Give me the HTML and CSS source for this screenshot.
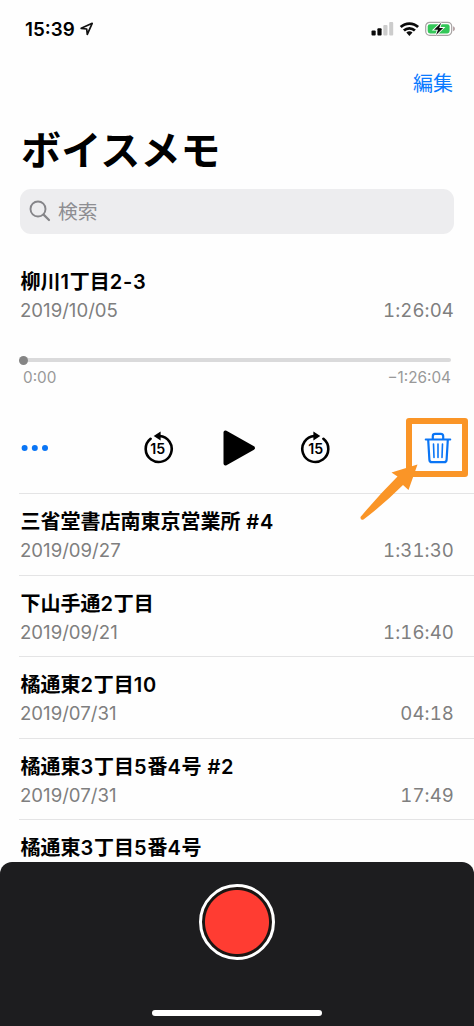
FILE: index.html
```html
<!DOCTYPE html>
<html lang="ja">
<head>
<meta charset="utf-8">
<title>ボイスメモ</title>
<link rel="stylesheet" href="styles.css">
</head>
<body>
<div class="screen">
  <header class="status">
    <div class="clock">15:39
      <svg class="location" width="14" height="14" viewBox="0 0 14 14"><path d="M1.2 6.3 12.2 1.3 7.3 12.3 6.7 7Z" fill="none" stroke="#111" stroke-width="1.7" stroke-linejoin="round"/></svg>
    </div>
    <svg class="indicators" width="86" height="16" viewBox="0 0 86 16">
      <g fill="#0a0a0a"><rect x="0.5" y="9.6" width="4.2" height="5" rx="1"/><rect x="6.4" y="7.2" width="4.2" height="7.4" rx="1"/></g>
      <g fill="#ccc"><rect x="12.3" y="4" width="4.2" height="10.6" rx="1"/><rect x="18.2" y="1" width="4" height="13.6" rx="1"/></g>
      <g fill="none" stroke="#0a0a0a" stroke-width="2.7"><path d="M29.7 6.1A12.6 12.6 0 0 1 47.1 6.1"/><path d="M32.9 9.5A8 8 0 0 1 43.9 9.5"/></g>
      <path d="M35.3 11.6A4.6 4.6 0 0 1 41.5 11.6L38.4 14.9Z" fill="#0a0a0a"/>
      <rect x="54.7" y="1.3" width="26" height="13" rx="4" fill="#fff" stroke="#a7a3a3" stroke-width="1.2"/>
      <rect x="56.7" y="3.2" width="21.9" height="9.2" rx="2.3" fill="#34c759"/>
      <path d="M82.2 5.3C84.3 6 84.3 9.6 82.2 10.3Z" fill="#a78f92"/>
      <path d="M70.2 1.8 63 8.7H67L65 13.9 72.2 7H68.2Z" fill="#0a0a0a" stroke="#fff" stroke-width="1.8" paint-order="stroke"/>
    </svg>
  </header>
  <nav class="nav">編集</nav>
  <h1 class="heading">ボイスメモ</h1>
  <div class="search">
    <svg width="22" height="22" viewBox="0 0 22 22" fill="none" stroke="#858589" stroke-width="1.9" stroke-linecap="round"><circle cx="9" cy="9" r="7.5"/><path d="M14.6 14.6 20 20" stroke-width="2.2"/></svg>
    <span>検索</span>
  </div>

  <section class="player">
    <h2 class="name">柳川<span class="n">1</span>丁目<span class="n">2-3</span></h2>
    <div class="meta"><span class="date">2019/10/05</span><span class="length">1:26:04</span></div>
    <div class="track"><i class="knob"></i></div>
    <div class="times"><span>0:00</span><span>−1:26:04</span></div>
    <div class="controls">
      <svg class="more" width="28" height="8" viewBox="0 0 28 8" fill="#0a75f5"><circle cx="3.6" cy="4" r="3"/><circle cx="13.8" cy="4" r="3"/><circle cx="24" cy="4" r="3"/></svg>
      <svg class="skip" width="32" height="34" viewBox="0 0 32 34"><path d="M8.6 7.8A13 13 0 1 0 17.5 5" fill="none" stroke="#000" stroke-width="2.6" stroke-linecap="round"/><path d="M11.7 5.1 18.6.6V9.6Z"/><text x="15.8" y="23.3" text-anchor="middle">15</text></svg>
      <svg class="play" width="34" height="38" viewBox="0 0 34 38"><path d="M3.5 3.5V34.5L31 19Z" stroke="#000" stroke-width="4" stroke-linejoin="round"/></svg>
      <svg class="skip forward" width="32" height="34" viewBox="0 0 32 34"><path d="M23.4 7.8A13 13 0 1 1 14.5 5" fill="none" stroke="#000" stroke-width="2.6" stroke-linecap="round"/><path d="M20.3 5.1 13.4.6V9.6Z"/><text x="15.8" y="23.3" text-anchor="middle">15</text></svg>
      <div class="delete">
        <svg width="28" height="32" viewBox="0 0 28 32" fill="none" stroke="#0a75f5" stroke-width="2.2" stroke-linecap="round" stroke-linejoin="round"><path d="M1.8 7.5H26.2M8.8 7V4.2Q8.8 1.8 11.2 1.8H16.8Q19.2 1.8 19.2 4.2V7M4.2 8 5.4 27.8Q5.6 30.2 8 30.2H20Q22.4 30.2 22.6 27.8L23.8 8"/><path d="M9.5 12 10 25.5M14 12V25.5M18.5 12 18 25.5" stroke-width="1.6"/></svg>
        <svg class="arrow" width="62" height="60" viewBox="0 0 62 60"><path d="M58.5 1.5 32.5 9.5 38.5 13.5Q20 32 1.5 54Q1.2 57.5 4.5 56.5Q25 41 44 22L49.5 27Z" fill="#fa9527"/></svg>
      </div>
    </div>
  </section>

  <main class="list">
    <article class="memo"><h2 class="name">三省堂書店南東京営業所<span class="n"> #4</span></h2><div class="meta"><span class="date">2019/09/27</span><span class="length">1:31:30</span></div></article>
    <article class="memo"><h2 class="name">下山手通<span class="n">2</span>丁目</h2><div class="meta"><span class="date">2019/09/21</span><span class="length">1:16:40</span></div></article>
    <article class="memo"><h2 class="name">橘通東<span class="n">2</span>丁目<span class="n">10</span></h2><div class="meta"><span class="date">2019/07/31</span><span class="length">04:18</span></div></article>
    <article class="memo"><h2 class="name">橘通東<span class="n">3</span>丁目<span class="n">5</span>番<span class="n">4</span>号<span class="n"> #2</span></h2><div class="meta"><span class="date">2019/07/31</span><span class="length">17:49</span></div></article>
    <article class="memo"><h2 class="name">橘通東<span class="n">3</span>丁目<span class="n">5</span>番<span class="n">4</span>号</h2></article>
  </main>

  <footer class="recorder">
    <div class="record"></div>
    <div class="home"></div>
  </footer>
</div>
</body>
</html>
```

FILE: styles.css
```css
* { box-sizing: border-box; }
body { margin: 0; background: #fff; }
svg { display: block; flex: none; }

.screen {
  width: 474px;
  height: 1026px;
  overflow: hidden;
  display: flex;
  flex-direction: column;
  background: #fefefe;
  color: #000;
  font-family: Inter, "Noto Sans CJK JP", sans-serif;
}

.status {
  height: 58px;
  flex: none;
  display: flex;
  justify-content: space-between;
  align-items: center;
  padding: 0 17px 0 25px;
}
.clock {
  display: flex;
  align-items: center;
  gap: 5px;
  font-size: 18.8px;
  font-weight: 600;
  line-height: 25px;
}

.nav {
  height: 50px;
  flex: none;
  padding-right: 21px;
  text-align: right;
  font-size: 20px;
  font-weight: 400;
  line-height: 52px;
  color: #0a7aff;
}

.heading {
  margin: 0;
  height: 81px;
  flex: none;
  padding-left: 21px;
  font-size: 40px;
  font-weight: 700;
  letter-spacing: 0.2px;
  line-height: 86px;
}

.search {
  height: 45px;
  flex: none;
  display: flex;
  align-items: center;
  gap: 7px;
  margin: 0 20px;
  padding: 0 0 2px 9px;
  border-radius: 11px;
  background: #ededef;
  color: #8e8e92;
  font-size: 19.8px;
  font-weight: 400;
}

.player {
  height: 259px;
  flex: none;
  padding-top: 33px;
}
.name {
  margin: 0;
  padding-left: 20.5px;
  height: 29px;
  font-size: 20px;
  font-weight: 600;
  line-height: 30px;
  white-space: pre;
}
.n {
  font-size: 20px;
  letter-spacing: 0.8px;
}
.meta {
  display: flex;
  justify-content: space-between;
  padding: 0 20px;
  font-size: 18.6px;
  line-height: 29px;
  color: #7f7f7f;
}
.length {
  font-variant-numeric: tabular-nums;
  letter-spacing: 0.1px;
}
.track {
  height: 4px;
  margin: 33px 23px 0 20px;
  border-radius: 2px;
  background: #dadadb;
  display: flex;
  align-items: center;
}
.knob {
  width: 9px;
  height: 9px;
  margin-left: -1px;
  border-radius: 50%;
  background: #858585;
}
.times {
  display: flex;
  justify-content: space-between;
  padding: 0 23px;
  margin-top: 5px;
  font-size: 15.3px;
  line-height: 21px;
  color: #999;
}
.controls {
  display: grid;
  grid-template-columns: 120px 80px 80px 80px 1fr;
  align-items: center;
  height: 59px;
  margin: 30px 0 0 20px;
}
.more { margin-left: 1px; }
.skip { margin-left: 2px; }
.forward { margin-left: 0; }
.play { margin-left: 2px; }
.skip text {
  font: 600 14.2px Inter, sans-serif;
}
.delete {
  width: 62px;
  height: 59px;
  margin-left: 26px;
  padding-left: 2px;
  display: grid;
  place-items: center;
  border: 6px solid #fa9527;
  border-radius: 3px;
  position: relative;
}
.arrow {
  position: absolute;
  left: -53px;
  top: 39px;
}

.list { flex: none; }
.memo {
  height: 81.5px;
  padding-top: 14.2px;
  background: linear-gradient(#e4e4e5, #e4e4e5) 19px 0 / 100% 1px no-repeat;
}

.recorder {
  position: absolute;
  left: 0;
  top: 862px;
  width: 474px;
  height: 164px;
  padding-top: 22px;
  display: flex;
  flex-direction: column;
  align-items: center;
  justify-content: space-between;
  border-radius: 12px 12px 0 0;
  background: #1d1d1f;
}
.record {
  width: 76px;
  height: 76px;
  border: 3px solid #fff;
  border-radius: 50%;
  background: radial-gradient(circle, #ff3c32 31.5px, #1a1512 32.5px);
}
.home {
  width: 170px;
  height: 6px;
  margin-bottom: 10px;
  border-radius: 3px;
  background: #fff;
}
```
